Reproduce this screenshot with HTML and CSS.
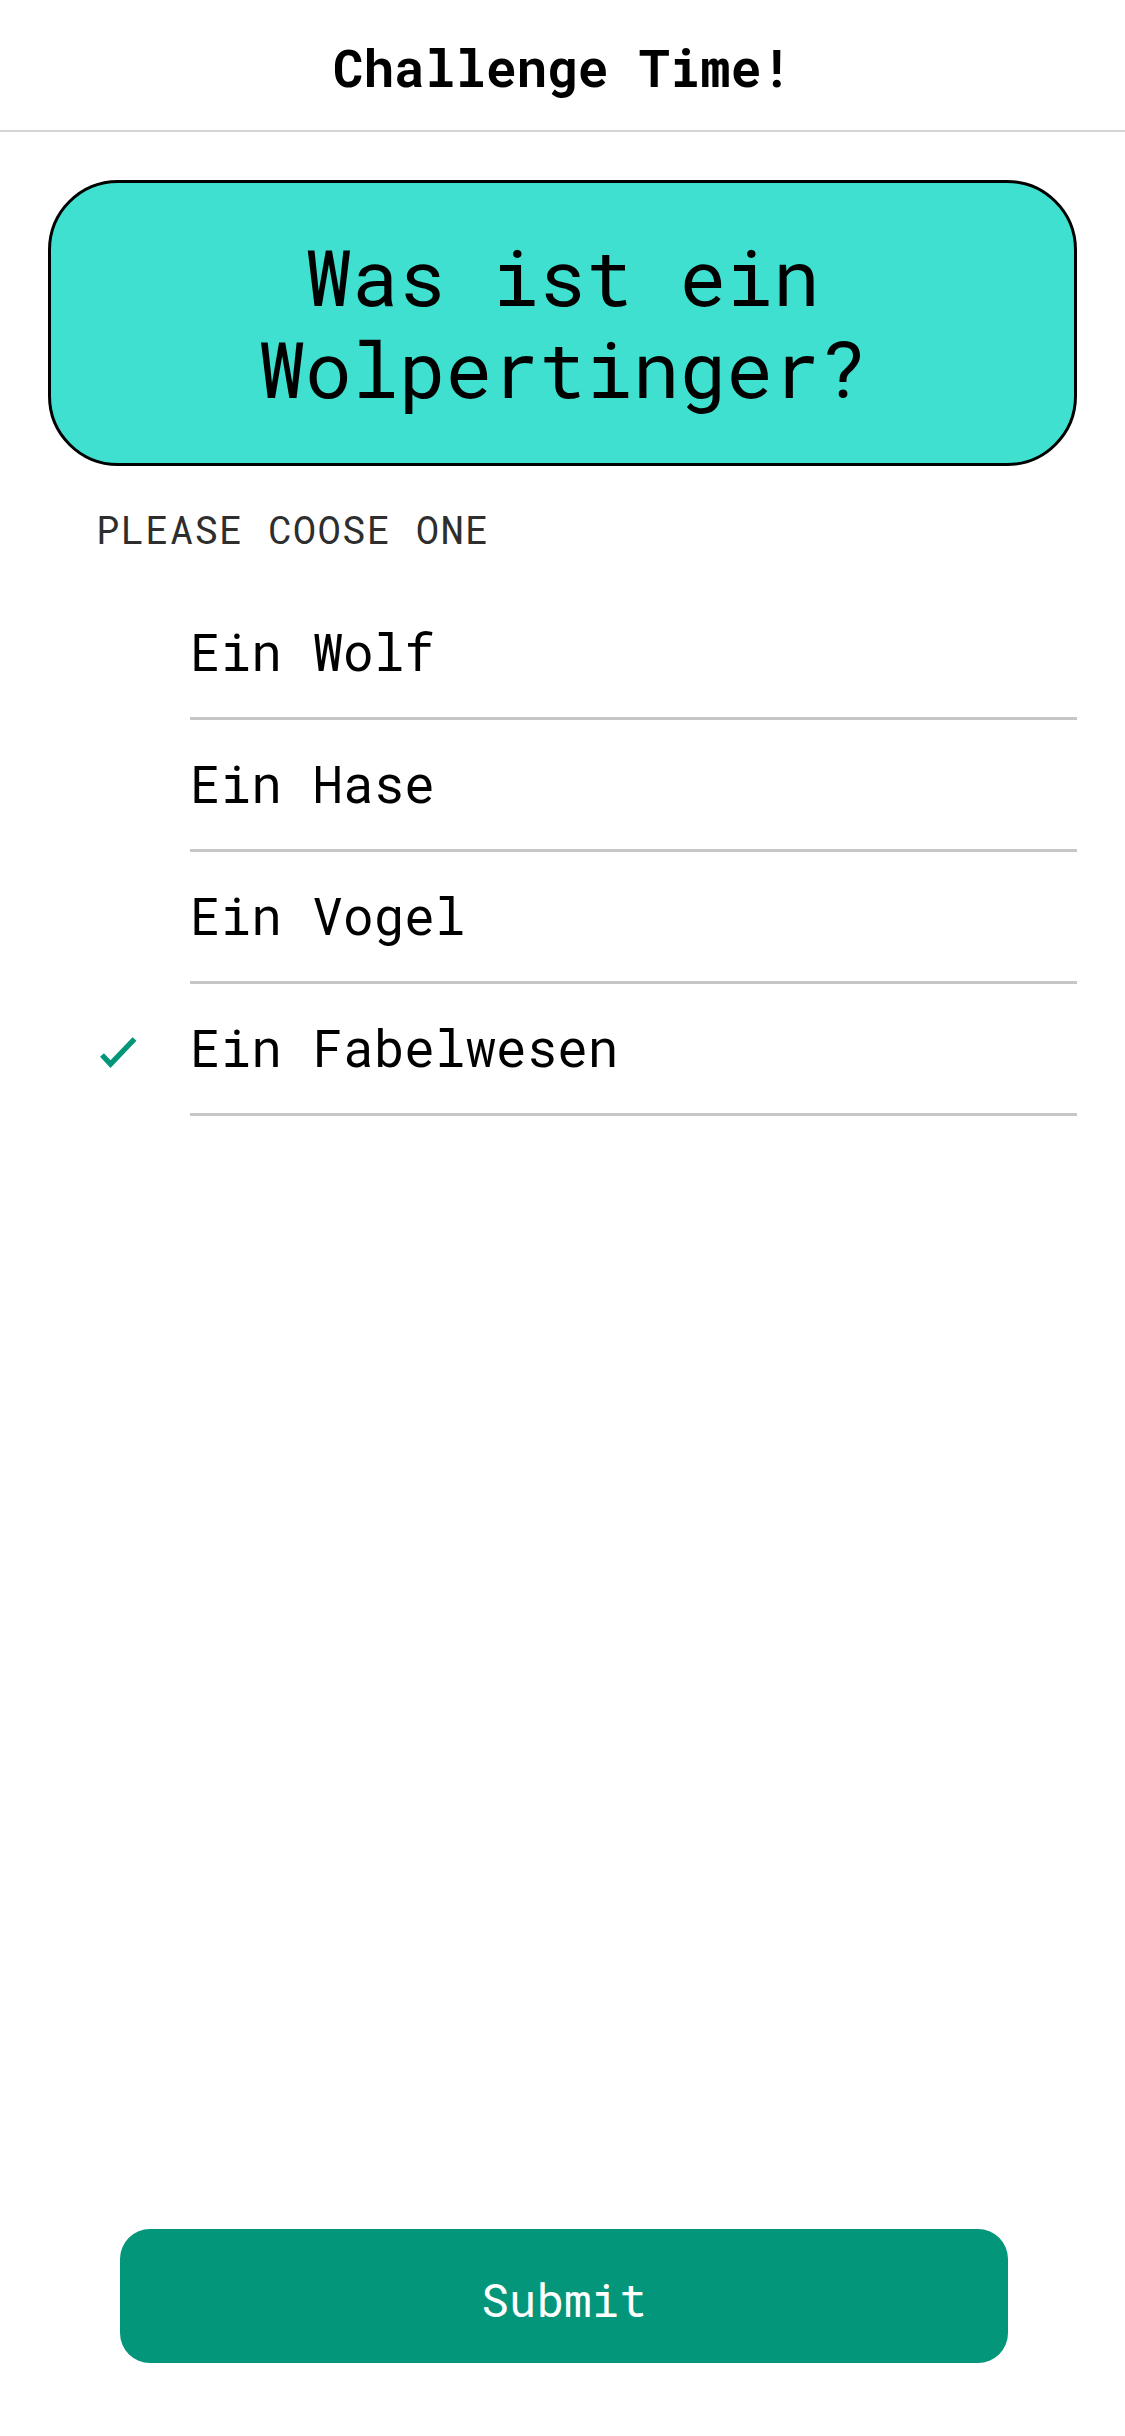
FILE: index.html
```html
<!DOCTYPE html>
<html lang="de">
<head>
<meta charset="utf-8">
<title>Challenge Time!</title>
<link rel="stylesheet" href="styles.css">
</head>
<body>
<div class="app">
  <header class="nav">
    <h1 class="nav-title">Challenge Time!</h1>
  </header>

  <section class="question">
    <p class="question-text">Was ist ein<br>Wolpertinger?</p>
  </section>

  <p class="section-label">PLEASE COOSE ONE</p>

  <ul class="options">
    <li class="option">
      <span class="option-icon"></span>
      <span class="option-text">Ein Wolf</span>
    </li>
    <li class="option">
      <span class="option-icon"></span>
      <span class="option-text">Ein Hase</span>
    </li>
    <li class="option">
      <span class="option-icon"></span>
      <span class="option-text">Ein Vogel</span>
    </li>
    <li class="option option-selected">
      <span class="option-icon">
        <svg class="check" width="44" height="40" viewBox="0 0 44 40" aria-hidden="true">
          <polyline points="6,25 14.5,34 38.5,9" fill="none" stroke="#04967a" stroke-width="5.4" stroke-linecap="butt" stroke-linejoin="miter"/>
        </svg>
      </span>
      <span class="option-text">Ein Fabelwesen</span>
    </li>
  </ul>

  <button class="submit" type="button">Submit</button>
</div>
</body>
</html>
```

FILE: styles.css
```css
html, body {
  margin: 0;
  padding: 0;
  background: #ffffff;
}

body {
  font-family: "Roboto Mono", "DejaVu Sans Mono", "Liberation Mono", monospace;
  color: #000000;
}

.app {
  display: flex;
  flex-direction: column;
  height: 2436px;
  width: 1125px;
  box-sizing: border-box;
}

.nav {
  height: 132px;
  box-sizing: border-box;
  padding-top: 42px;
  border-bottom: 2px solid #d4d4d4;
  text-align: center;
}

.nav-title {
  margin: 0;
  font-size: 51px;
  line-height: 51px;
  font-weight: 700;
}

.question {
  margin: 48px 48px 0 48px;
  height: 286px;
  box-sizing: border-box;
  padding-top: 47px;
  background: #40e0d0;
  border: 3px solid #000000;
  border-radius: 70px;
  text-align: center;
}

.question-text {
  margin: 0;
  font-size: 78px;
  line-height: 92px;
  font-weight: 400;
}

.section-label {
  margin: 44px 0 0 0;
  padding-left: 96px;
  font-size: 39px;
  line-height: 39px;
  letter-spacing: 1.2px;
  color: #2e2e2e;
}

.options {
  list-style: none;
  margin: 39px 0 0 0;
  padding: 0 48px 0 96px;
}

.option {
  display: flex;
  height: 132px;
}

.option-icon {
  width: 94px;
  flex: 0 0 94px;
  padding-top: 46px;
  box-sizing: border-box;
}

.check {
  display: block;
}

.option-text {
  flex: 1;
  height: 132px;
  box-sizing: border-box;
  padding-top: 1px;
  font-size: 51px;
  line-height: 125px;
  border-bottom: 3px solid #c6c6c9;
  white-space: nowrap;
}

.submit {
  margin: auto 117px 73px 120px;
  height: 134px;
  padding: 5px 0 0 0;
  border: none;
  border-radius: 30px;
  background: #04967a;
  color: #ffffff;
  font-family: "Roboto Mono", "DejaVu Sans Mono", "Liberation Mono", monospace;
  font-size: 46px;
  font-weight: 400;
  line-height: 46px;
  text-align: center;
}
```
